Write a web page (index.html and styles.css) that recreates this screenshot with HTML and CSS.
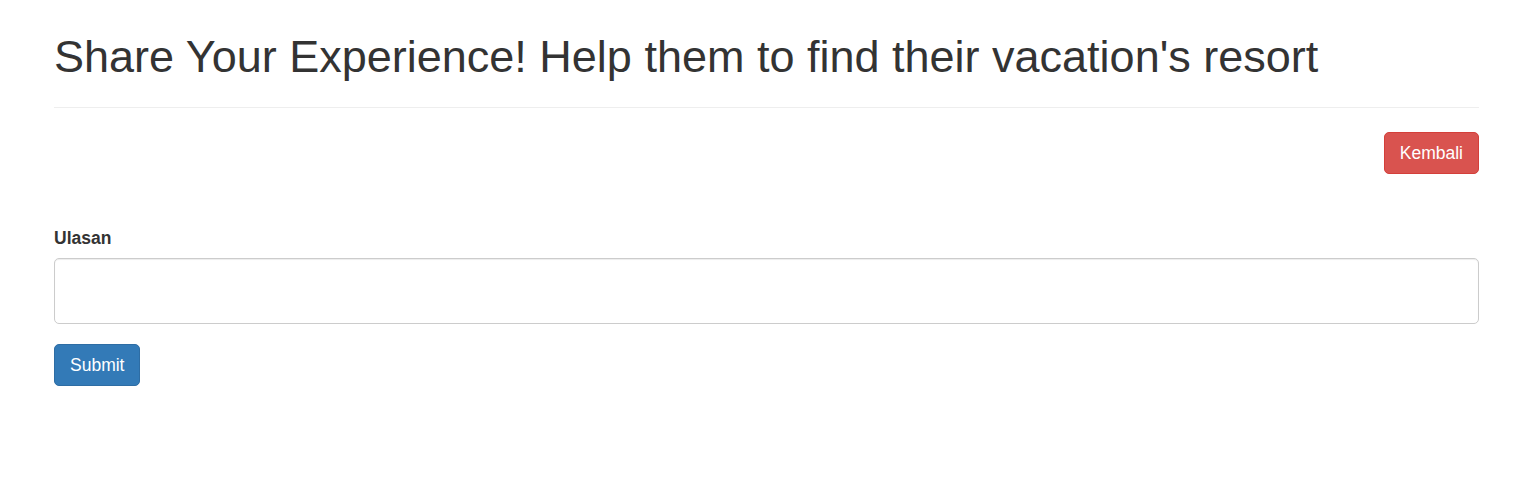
FILE: index.html
```html
<!DOCTYPE html>
<html lang="id">
<head>
<meta charset="utf-8">
<title>Ulasan</title>
<link rel="stylesheet" href="styles.css">
</head>
<body>
<div class="container">
  <div class="page-header">
    <h1>Share Your Experience! Help them to find their vacation's resort</h1>
  </div>
  <div class="actions">
    <a class="btn btn-danger" href="#">Kembali</a>
  </div>
  <form class="review-form">
    <div class="form-group">
      <label class="form-label" for="ulasan">Ulasan</label>
      <textarea class="form-control" id="ulasan"></textarea>
    </div>
    <button type="button" class="btn btn-primary">Submit</button>
  </form>
</div>
</body>
</html>
```

FILE: styles.css
```css
* { box-sizing: border-box; }
html, body { margin: 0; padding: 0; background: #fff; }
body {
  font-family: "Liberation Sans", Arial, Helvetica, sans-serif;
  font-size: 17.5px;
  line-height: 25px;
  color: #333;
}
.container {
  width: 1425px;
  margin: 0 0 0 54px;
  padding: 0;
}
.page-header {
  padding-top: 32px;
  padding-bottom: 13px;
  border-bottom: 1px solid #eee;
  margin-bottom: 24px;
}
.page-header h1 {
  margin: 0 0 12.5px 0;
  font-size: 45px;
  line-height: 49.5px;
  font-weight: 500;
  color: #333;
}
.actions {
  display: flex;
  justify-content: flex-end;
}
.btn {
  display: inline-block;
  padding: 7.5px 15px;
  font-family: inherit;
  font-size: 17.5px;
  line-height: 25px;
  border: 1px solid transparent;
  border-radius: 5px;
  color: #fff;
  text-decoration: none;
  cursor: pointer;
}
.btn-danger { background: #d9534f; border-color: #d43f3a; }
.btn-primary { background: #337ab7; border-color: #2e6da4; }
.review-form { margin-top: 52px; }
.form-group { margin-bottom: 20px; }
.form-label {
  display: block;
  font-weight: bold;
  margin-bottom: 7px;
}
.form-control {
  display: block;
  width: 100%;
  height: 66px;
  padding: 7.5px 15px;
  font-family: inherit;
  font-size: 17.5px;
  line-height: 25px;
  color: #555;
  background: #fff;
  border: 1px solid #ccc;
  border-radius: 5px;
  box-shadow: inset 0 1px 1px rgba(0,0,0,.075);
  resize: none;
}
```
